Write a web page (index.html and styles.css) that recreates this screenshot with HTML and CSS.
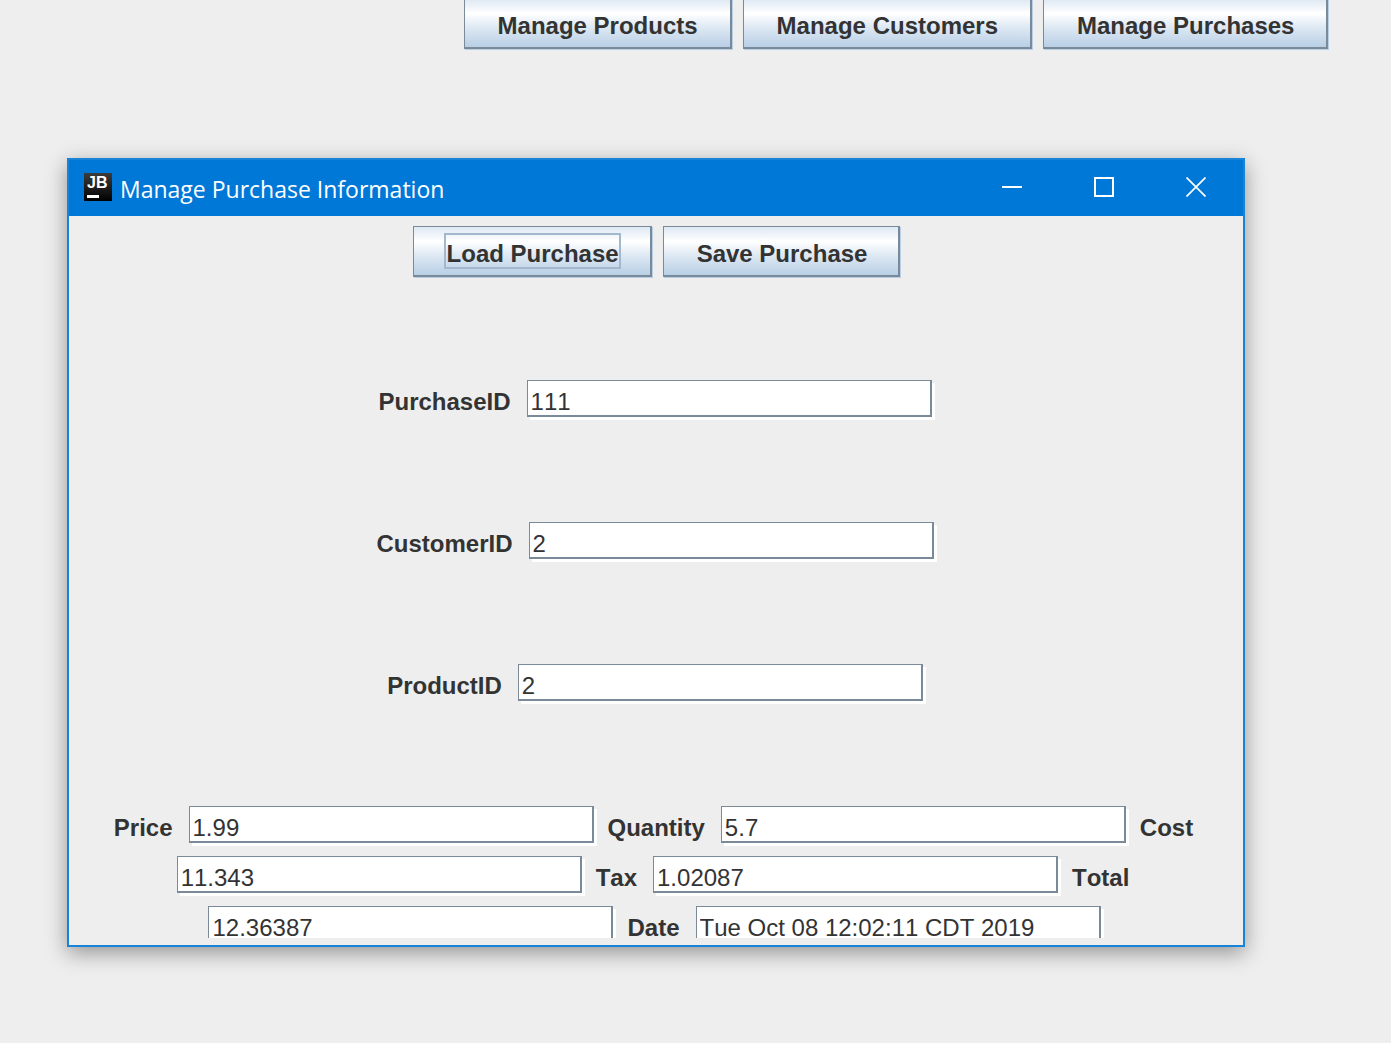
FILE: index.html
```html
<!DOCTYPE html>
<html lang="en">
<head>
<meta charset="utf-8">
<title>Manage Purchase Information</title>
<link rel="stylesheet" href="styles.css">
</head>
<body>
<nav class="main-menu">
  <button type="button" class="btn btn-wide"><span class="btn-label">Manage Products</span></button>
  <button type="button" class="btn btn-wide"><span class="btn-label">Manage Customers</span></button>
  <button type="button" class="btn btn-wide"><span class="btn-label">Manage Purchases</span></button>
</nav>
<main class="window">
  <header class="title-bar">
    <span class="app-icon">JB</span>
    <h1 class="title">Manage Purchase Information</h1>
    <div class="window-controls">
      <button type="button" class="control" aria-label="Minimize"><svg width="20" height="20" viewBox="0 0 20 20"><path d="M0 10H20" stroke="#fff" stroke-width="2"/></svg></button>
      <button type="button" class="control" aria-label="Maximize"><svg width="20" height="20" viewBox="0 0 20 20"><rect x="1" y="1" width="18" height="18" fill="none" stroke="#fff" stroke-width="2"/></svg></button>
      <button type="button" class="control" aria-label="Close"><svg width="20" height="20" viewBox="0 0 20 20"><path d="M.5 .5L19.5 19.5M19.5 .5L.5 19.5" stroke="#fff" stroke-width="1.7"/></svg></button>
    </div>
  </header>
  <form class="purchase-form">
    <div class="toolbar">
      <button type="button" class="btn"><span class="btn-label focused">Load Purchase</span></button>
      <button type="button" class="btn"><span class="btn-label">Save Purchase</span></button>
    </div>
    <div class="row">
      <label for="purchase-id">PurchaseID</label><input type="text" id="purchase-id" value="111">
    </div>
    <div class="row">
      <label for="customer-id">CustomerID</label><input type="text" id="customer-id" value="2">
    </div>
    <div class="row">
      <label for="product-id">ProductID</label><input type="text" id="product-id" value="2">
    </div>
    <div class="row">
      <label for="price">Price</label><input type="text" id="price" value="1.99">
      <label for="quantity">Quantity</label><input type="text" id="quantity" value="5.7">
      <label for="cost">Cost</label><input type="text" id="cost" value="11.343">
      <label for="tax">Tax</label><input type="text" id="tax" value="1.02087">
      <label for="total">Total</label><input type="text" id="total" value="12.36387">
      <label for="date">Date</label><input type="text" id="date" value="Tue Oct 08 12:02:11 CDT 2019">
    </div>
  </form>
</main>
</body>
</html>
```
FILE: styles.css
```css
* { box-sizing: border-box; }

body {
  display: flow-root;
  min-height: 100vh;
  margin: 0;
  overflow: hidden;
  background: #eee;
  color: #333;
  font: 24px/28px "Liberation Sans", Arial, sans-serif;
  font-kerning: none;
}

.main-menu {
  display: flex;
  justify-content: center;
  gap: 10px;
  margin-top: -2px;
  padding-left: 402px;
}

.btn {
  margin: 0 1px 1px 0;
  padding: 8px 31px 8px 32px;
  border: solid #7a8a99;
  border-width: 1px 2px 2px 1px;
  border-radius: 0;
  background: linear-gradient(#dde8f3, #fff 30%, #dde8f3 60%, #b8cfe5);
  box-shadow: 1px 1px 0 #b8cfe5;
  color: #333;
  font: bold 24px/27px "Liberation Sans", Arial, sans-serif;
  font-kerning: none;
  white-space: nowrap;
}

.btn-wide { padding: 8px 32px; }

.btn-label {
  display: block;
  padding: 5px 0 0 1px;
}

.focused { outline: 2px solid #a3b8cc; }

.window {
  margin: 108px 146px 0 67px;
  border: 2px solid #1883d7;
  background: #eee;
  box-shadow: 0 6px 20px rgba(0, 0, 0, 0.38);
}

.title-bar {
  display: flex;
  align-items: center;
  height: 56px;
  padding: 0 1px 2px 15px;
  background: #0078d7;
  color: #fff;
}

.app-icon {
  position: relative;
  width: 28px;
  height: 28px;
  padding-left: 3px;
  background: linear-gradient(#3c3c3c, #000);
  font: bold 16px/20px "Liberation Sans", Arial, sans-serif;
}

.app-icon::after {
  content: "";
  position: absolute;
  left: 3px;
  bottom: 3px;
  width: 12px;
  height: 3px;
  background: #fff;
}

.title {
  flex: 1;
  margin: 0;
  padding: 3px 0 0 8px;
  font: 23px/28px "Open Sans", "Noto Sans", sans-serif;
}

.window-controls { display: flex; }

.control {
  display: grid;
  place-items: center;
  width: 92px;
  height: 54px;
  padding: 0;
  border: 0;
  background: none;
}

.purchase-form { padding: 0 0 7px; }

.toolbar {
  display: flex;
  justify-content: center;
  align-items: flex-start;
  gap: 10px;
  height: 154px;
  padding: 10px 0 0 2px;
}

.row {
  display: flex;
  flex-wrap: wrap;
  justify-content: center;
  align-content: flex-start;
  gap: 10px;
  height: 142px;
  padding-top: 10px;
  overflow: hidden;
}

.row label {
  padding: 8px 6px 0 1px;
  font-weight: bold;
}

.row input {
  width: 405px;
  height: 37px;
  margin: 0 3px 3px 0;
  padding: 7px 2px 0 3px;
  border: solid #7a8a99;
  border-width: 1px 2px 2px 1px;
  border-radius: 0;
  outline: 0;
  background: #fff;
  box-shadow: 3px 3px 0 #fff;
  color: #333;
  font: 24px/28px "Liberation Sans", Arial, sans-serif;
  font-kerning: none;
}
```
